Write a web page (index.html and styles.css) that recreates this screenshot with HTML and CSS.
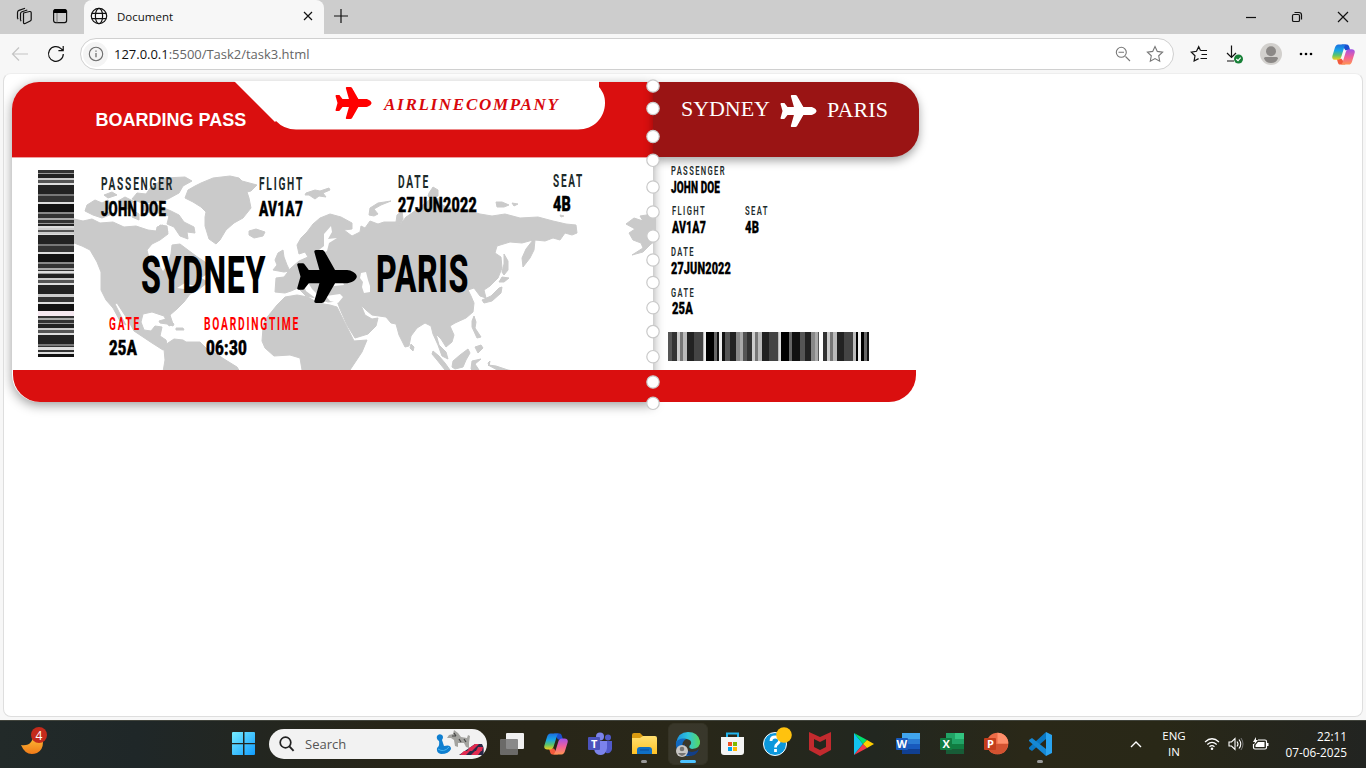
FILE: index.html
```html
<!DOCTYPE html>
<html lang="en">
<head>
<meta charset="utf-8">
<title>Document</title>
<link rel="stylesheet" href="styles.css">
</head>
<body>
<svg class="defs" width="0" height="0">
  <defs>
    <symbol id="plane" viewBox="0 0 576 512"><path d="M482.3 192c34.2 0 93.7 29 93.7 64c0 36-59.5 64-93.7 64l-116.6 0L265.2 495.9c-5.7 10-16.3 16.1-27.8 16.1l-56.2 0c-10.6 0-18.3-10.2-15.4-20.4l49-171.6L112 320 68.8 377.6c-3 4-7.8 6.4-12.8 6.4l-42 0c-7.8 0-14-6.3-14-14c0-1.3 .2-2.6 .5-3.9L32 256 .5 145.9c-.4-1.3-.5-2.6-.5-3.9c0-7.8 6.3-14 14-14l42 0c5 0 9.8 2.4 12.8 6.4L112 192l102.9 0-49-171.6C162.9 10.2 170.6 0 181.2 0l56.2 0c11.5 0 22.1 6.2 27.8 16.1L365.7 192l116.6 0z"/></symbol>
    <linearGradient id="cpA" x1="0" y1="0" x2="0" y2="1"><stop offset="0" stop-color="#1b6fe0"/><stop offset=".4" stop-color="#18a6e6"/><stop offset=".7" stop-color="#5cc46a"/><stop offset="1" stop-color="#f2cf1d"/></linearGradient>
    <linearGradient id="cpB" x1="0" y1="0" x2="0" y2="1"><stop offset="0" stop-color="#a052e8"/><stop offset=".5" stop-color="#f0609a"/><stop offset="1" stop-color="#ff9452"/></linearGradient>
    <symbol id="copilot" viewBox="0 0 24 24">
      <path fill="#1b4fd0" d="M10 1.500h5.500c1.700 0 2.200 1.500 2.600 3l.9 3h-5z"/>
      <path fill="#f25a3c" d="M14 22.500H8.500c-1.700 0-2.200-1.500-2.600-3l-.9-3h5z"/>
      <path fill="url(#cpA)" d="M6.500 1.500H15c-1.500.5-2 2-2.500 3.700L9.800 14c-.6 2-1.500 3.500-3.800 3.500H3.300c-2.300 0-3.600-1.500-2.900-4L3 5c.7-2.200 1.700-3.500 3.500-3.500z"/>
      <path fill="url(#cpB)" d="M17.500 22.500H9c1.500-.5 2-2 2.500-3.700l2.700-8.800c.6-2 1.500-3.500 3.800-3.500h2.700c2.300 0 3.600 1.500 2.900 4L21 19c-.7 2.200-1.700 3.500-3.500 3.500z"/>
    </symbol>
    <linearGradient id="win" x1="0" y1="0" x2="1" y2="1"><stop offset="0" stop-color="#76ecff"/><stop offset="1" stop-color="#119cff"/></linearGradient>
    <linearGradient id="edge" x1="0" y1="0" x2="1" y2="0"><stop offset="0" stop-color="#1a8fe0"/><stop offset=".5" stop-color="#2ec4dc"/><stop offset="1" stop-color="#58d85c"/></linearGradient>
    <linearGradient id="fold" x1="0" y1="0" x2="0" y2="1"><stop offset="0" stop-color="#ffdf70"/><stop offset="1" stop-color="#ffc225"/></linearGradient>
    <linearGradient id="moon" x1="0" y1="0" x2="0" y2="1"><stop offset="0" stop-color="#ffc83c"/><stop offset="1" stop-color="#f07a18"/></linearGradient>
  </defs>
</svg>

<header class="tabstrip">
  <div class="strip-icons">
    <svg width="18" height="18" viewBox="0 0 18 18" class="line"><path d="M8.500 6l6-1.500q1.700-.2 1.700 1.300v6.700q0 1-1 1.500l-5 2.500q-1.700.5-1.700-1V7.500zM5.500 13.500V6.800q0-1.500 1.500-2.100l5.300-1.700M2.500 11.500V5.500q0-1.600 1.500-2.100L10 1.300M5.500 13.500l.8.600M2.500 11.500l.8.600"/></svg>
    <svg width="16" height="16" viewBox="0 0 16 16"><rect x="1.600" y="1.600" width="13" height="13" rx="2" fill="none" stroke="#111" stroke-width="1.200"/><path d="M1.500 3q0-2 2-2h9q2 0 2 2v2h-13z" fill="#000"/><path d="M5 5v9.500" stroke="#777"/></svg>
  </div>
  <div class="tab">
    <svg width="18" height="18" viewBox="0 0 18 18" class="line"><circle cx="9" cy="9" r="7.700"/><ellipse cx="9" cy="9" rx="3.600" ry="7.700"/><path d="M2 6.300h14M2 11.700h14"/></svg>
    <span class="tab-title">Document</span>
    <svg width="10" height="10" viewBox="0 0 10 10" class="line"><path d="M1 1l8 8M9 1l-8 8"/></svg>
  </div>
  <svg class="plus line" width="16" height="16" viewBox="0 0 16 16"><path d="M8 1v14M1 8h14"/></svg>
  <div class="win-buttons">
    <svg width="12" height="12" viewBox="0 0 12 12" class="line"><path d="M1 6.500h10"/></svg>
    <svg width="12" height="12" viewBox="0 0 12 12" class="line"><rect x="1.500" y="3.500" width="7" height="7" rx="1.300"/><path d="M3.500 1.500H8q2.500 0 2.500 2.500v4.500"/></svg>
    <svg width="12" height="12" viewBox="0 0 12 12" class="line"><path d="M1 1l10 10M11 1L1 11"/></svg>
  </div>
</header>

<nav class="toolbar">
  <svg class="back" width="18" height="16" viewBox="0 0 18 16"><path d="M17 8H1.500M8 1.500L1.500 8 8 14.500" fill="none" stroke="#c4c4c4" stroke-width="1.200"/></svg>
  <svg class="reload line" width="18" height="18" viewBox="0 0 18 18"><path d="M16.300 9A7.400 7.400 0 1 1 14 3.600L16 5.500M16.200 1v4.700h-4.800"/></svg>
  <div class="address">
    <span class="info"><svg width="16" height="16" viewBox="0 0 16 16"><circle cx="8" cy="8" r="6.700" fill="none" stroke="#6e6e6e" stroke-width="1.100"/><path d="M8 7v4.200M8 4.500v1.300" stroke="#666" stroke-width="1.200"/></svg></span>
    <span class="url"><b>127.0.0.1</b>:5500/Task2/task3.html</span>
    <svg class="mag" width="16" height="16" viewBox="0 0 16 16"><path d="M10.500 10.500l4.500 4.500M3.500 6.300h5.500" /><circle cx="6.300" cy="6.300" r="5"/></svg>
    <svg class="mag" width="18" height="18" viewBox="0 0 18 18"><path d="M9 1.500l2.300 4.900 5.300.7-3.900 3.700 1 5.400L9 13.600l-4.700 2.600 1-5.400L1.400 7.100l5.300-.7z"/></svg>
  </div>
  <div class="tools">
    <svg width="18" height="18" viewBox="0 0 18 18" class="line"><path d="M10.500 5.500L8.700 1.700 6.500 6.300l-5.200.8L5 10.800l-.9 5.200 4.500-2.400M10.500 5.500H17M11.500 9.500H17M10.500 13.500H17"/></svg>
    <svg width="20" height="20" viewBox="0 0 20 20" class="line"><path d="M7.500 1.500v12M3 9l4.500 4.500L12 9M3 17h7"/><circle cx="14.500" cy="15" r="4.500" fill="#188038" stroke="none"/><path d="M12.300 15l1.700 1.600 2.700-3" stroke="#fff"/></svg>
    <svg width="22" height="22" viewBox="0 0 22 22"><circle cx="11" cy="11" r="11" fill="#d2d0cd"/><circle cx="11" cy="8.200" r="5" fill="#8b8886"/><path d="M4 15.500q0-1.500 1.500-1.500h11q1.500 0 1.500 1.500-2 4.500-7 4.500t-7-4.500z" fill="#8b8886"/></svg>
    <svg width="16" height="16" viewBox="0 0 16 16"><circle cx="3" cy="8" r="1.300"/><circle cx="8" cy="8" r="1.300"/><circle cx="13" cy="8" r="1.300"/></svg>
    <svg class="copilot" width="23" height="23"><use href="#copilot"/></svg>
  </div>
</nav>

<main class="viewport">
  <section class="ticket">
    <div class="pass">
      <div class="pass-head">
        <h1>BOARDING PASS</h1>
        <div class="brand">
          <svg class="brand-shape" width="372" height="49" viewBox="0 0 372 49"><path d="M-1-1L40 40l1-1q8 8.500 20 8.500h282c16 0 27-12 27-26.500 0-7-2-11-6-16V-1z" fill="#fff"/></svg>
          <svg class="brand-plane" width="37" height="32"><use href="#plane" fill="#f00"/></svg>
          <svg class="brand-name" width="180" height="22"><text x="0" y="16" textLength="174">AIRLINECOMPANY</text></svg>
        </div>
      </div>
      <div class="pass-body">
        <svg class="map" width="644" height="212" viewBox="12 158 644 212">
          <g fill="#cacaca" stroke="#cacaca" stroke-width="1" stroke-linejoin="round">
            <path d="M74 219L83 221 92 219 100 223 113 222 124 227 136 226 148 230 156 231 160 225 167 226 168 234 160 240 152 244 147 250 149 258 157 262 163 272 168 264 171 254 172 245 180 244 188 250 196 256 205 262 212 270 205 275 200 278 208 282 198 290 190 294 184 302 177 309 170 315 173 324 169 326 164 316 152 312 143 314 141 322 144 330 151 331 155 326 162 327 160 336 166 340 168 348 163 350 152 343 143 337 134 331 128 320 117 303 115 304 121 316 126 325 120 321 113 308 106 300 101 290 101 272 97 262 90 250 82 246 74 243Z"/>
            <path d="M164 349l4-6 6-4 9 1 3 2 14 0 7 7 8 4 9 6 13 8 3 5h-77l2-12z"/>
            <path d="M188 190l7-4 6-3 12-5 17-2 9 2 3 3 15 4-6 6-4 1 2 6 2 10-8 10-9 5-8 7-6 10-4 4-7-5-4-13 0-9 1-5-5-5-8-5-8-4z"/>
            <path d="M87 205l8-5 7 3 6-3 4 7-8 4 8 3-10 4-9-3-8-4zM118 201l7-4 8 4-3 8-9 0zM104 195l8-3 5 3-9 3zM132 199l5-6 9 1 5-7 14-9 20-1 7 4-9 5-4 7-11 6-15 3-11 1zM142 206l11-2 9 3 9 4 8 4 5 7 10 5 1 6-8-1 1 7-8-3-6-9-7-3 2-8-10-3-9 0-7-3zM134 211l5 3 0 6-7-3zM157 227l6-2 5 7-6 3-6-2z"/>
            <path d="M249 231l7-2 9 3-2 4-9 2-5-3zM306 193l9-3 5 1 9-3 1 2-7 3 3 4-7-1-4 3-6-4-4 0z"/>
            <path d="M159 321l7-2 8 5-1 2-6-2-7-1zM176 328l7 0 1 2-8 0z"/>
            <path d="M297 245L301 238 307 232 313 224 320 218 330 214 341 217 352 223 352 229 344 230 352 236 360 232 361 226 365 228 370 221 378 224 384 222 396 222 397 215 402 211 403 219 399 226 406 217 412 213 420 207 432 198 440 199 442 205 450 208 466 210 480 214 492 216 505 214 520 218 538 217 553 221 566 224 576 225 577 233 572 235 565 233 560 240 553 238 545 241 535 240 534 250 530 258 523 267 522 258 526 249 533 240 522 243 510 242 497 246 495 253 501 257 502 268 498 278 490 286 484 290 486 298 480 296 474 288 468 290 471 296 474 303 473 312 466 318 455 323 450 326 454 335 452 342 446 347 441 339 436 334 439 345 446 352 448 359 442 356 438 345 433 334 431 326 425 323 417 328 411 336 409 346 405 347 399 335 396 324 391 323 386 317 372 315 366 310 361 305 365 315 372 319 378 318 376 326 368 334 355 338 347 325 340 309 337 301 328 302 316 298 306 296 298 288 291 291 285 293 275 292 276 278 284 277 291 268 299 261 308 257 305 252 299 254Z"/>
            <path d="M263 328L265 320 277 305 285 297 297 295 308 297 318 303 330 305 337 307 345 323 354 341 367 340 362 352 350 370 302 370 300 358 290 355 274 356 265 348 262 341Z"/>
            <path d="M273 270l4-5-2-5 3-7 5-3 1 7 3 8 3 6-6 1z"/>
            <path d="M369 215l1-7 8-5 13-2-10 4-7 4 4 5-4 2zM429 193l4-6 5 3 0 6-7 2-3-2zM496 202l6 0 7 3-5 2-7 0zM512 203l6 1-4 2zM560 215l4 1-3 1z"/>
            <path d="M653 214l-13 2 3 5-9-3-8 6 9 5-6 4 4 7 8 3 2 5-11 7 11-3 8-8 6-4v-24z"/>
            <path d="M504 254l4 7 0 9-4 5-2-3 2-8zM502 277l7 1-5 4-5 0zM502 287l-1 6-9 8-8 2-2-3 9-4 8-8zM474 316l2 6-1 6 6 9-4 1-5-11 0-6zM475 347l6-2 2 3-5 5zM411 344l3 3-1 4-3-3zM433 351l6 5 6 7 5 7h-5l-8-10-5-6zM453 361l7-6 8-6 2 4-4 7-3 7-8 2-3-2zM471 369l1-8 9-2-6 5 4 6-6 1zM488 363l2-2-1 5zM488 365l8 1 12 4 11 2h-18z"/>
          </g>
          <g fill="#fff">
            <path d="M361 273l5-1 2 8 2 6 0 6-6 1-2-6 1-5-3-4z"/>
            <path d="M324 234l7-8 1 6-4 7 9-1-8 5-2 8-8 4 0-5 5-4z"/>
            <path d="M325 281l8-5 9 4 2 5-10 1-8 2zM326 296l14-2 3 3-5 6-8-2zM304 285l5-1 3 5 8 8-2 6-4-6-8-6zM177 288l8-5 9 3-10 3z"/>
          </g>
        </svg>
        <div class="barcode vertical"></div>
        <div class="details">
          <div class="row row-top">
            <svg width="158" height="46" class="field"><text x="0" y="14.500" textLength="73" lengthAdjust="spacingAndGlyphs">PASSENGER</text><text class="v" x="0" y="40.500" textLength="65" lengthAdjust="spacingAndGlyphs">JOHN DOE</text></svg>
            <svg width="139" height="46" class="field"><text x="0" y="14.500" textLength="45" lengthAdjust="spacingAndGlyphs">FLIGHT</text><text class="v" x="0" y="40.500" textLength="44" lengthAdjust="spacingAndGlyphs">AV1A7</text></svg>
            <svg width="155" height="46" class="field"><text x="0" y="12.500" textLength="32" lengthAdjust="spacingAndGlyphs">DATE</text><text class="v" x="0" y="37" textLength="79" lengthAdjust="spacingAndGlyphs">27JUN2022</text></svg>
            <svg width="60" height="46" class="field"><text x="0" y="11.500" textLength="31" lengthAdjust="spacingAndGlyphs">SEAT</text><text class="v" x="0" y="36" textLength="18" lengthAdjust="spacingAndGlyphs">4B</text></svg>
          </div>
          <div class="row row-route">
            <svg width="155" height="54" class="city"><text x="-1" y="43" textLength="125" lengthAdjust="spacingAndGlyphs">SYDNEY</text></svg>
            <svg width="60" height="53"><use href="#plane"/></svg>
            <svg width="100" height="54" class="city paris"><text x="-1" y="42" textLength="93" lengthAdjust="spacingAndGlyphs">PARIS</text></svg>
          </div>
          <div class="row row-gate">
            <svg width="95" height="46" class="field red"><text x="-1" y="15" textLength="32" lengthAdjust="spacingAndGlyphs">GATE</text><text class="v" x="-1" y="40" textLength="28" lengthAdjust="spacingAndGlyphs">25A</text></svg>
            <svg width="110" height="46" class="field red"><text x="-1" y="15" textLength="96" lengthAdjust="spacingAndGlyphs">BOARDINGTIME</text><text class="v" x="1" y="40" textLength="41" lengthAdjust="spacingAndGlyphs">06:30</text></svg>
          </div>
        </div>
      </div>
      <div class="pass-foot"></div>
    </div>

    <div class="stub">
      <div class="stub-head">
        <svg width="99" height="30" class="serif"><text x="0" y="21" textLength="89">SYDNEY</text></svg>
        <svg class="stub-plane" width="37" height="32"><use href="#plane" fill="#fff"/></svg>
        <svg width="66" height="30" class="serif"><text x="0" y="21.500" textLength="61">PARIS</text></svg>
      </div>
      <div class="stub-body">
        <svg width="120" height="40" class="small"><text x="0" y="10" textLength="55" lengthAdjust="spacingAndGlyphs">PASSENGER</text><text class="v" x="0" y="28" textLength="49" lengthAdjust="spacingAndGlyphs">JOHN DOE</text></svg>
        <div class="pair">
          <svg width="74" height="41" class="small"><text x="1" y="10" textLength="34" lengthAdjust="spacingAndGlyphs">FLIGHT</text><text class="v" x="1" y="28" textLength="34" lengthAdjust="spacingAndGlyphs">AV1A7</text></svg>
          <svg width="60" height="41" class="small"><text x="0" y="10" textLength="24" lengthAdjust="spacingAndGlyphs">SEAT</text><text class="v" x="0" y="28" textLength="14" lengthAdjust="spacingAndGlyphs">4B</text></svg>
        </div>
        <svg width="120" height="41" class="small"><text x="0" y="10" textLength="24" lengthAdjust="spacingAndGlyphs">DATE</text><text class="v" x="0" y="28" textLength="60" lengthAdjust="spacingAndGlyphs">27JUN2022</text></svg>
        <svg width="120" height="44" class="small"><text x="0" y="10" textLength="24" lengthAdjust="spacingAndGlyphs">GATE</text><text class="v" x="1" y="27" textLength="21" lengthAdjust="spacingAndGlyphs">25A</text></svg>
        <div class="barcode horizontal"></div>
      </div>
      <div class="stub-foot"></div>
    </div>

    <svg class="holes" width="16" height="332" viewBox="0 78 16 332">
      <g fill="#fff" stroke="#c9c9c9" stroke-width="1.200"><circle cx="8" cy="86" r="6.200"/><circle cx="8" cy="108.500" r="6.200"/><circle cx="8" cy="136.500" r="6.200"/><circle cx="8" cy="160.300" r="6.200"/><circle cx="8" cy="187" r="6.200"/><circle cx="8" cy="212" r="6.200"/><circle cx="8" cy="236" r="6.200"/><circle cx="8" cy="260" r="6.200"/><circle cx="8" cy="282.500" r="6.200"/><circle cx="8" cy="307.700" r="6.200"/><circle cx="8" cy="331.600" r="6.200"/><circle cx="8" cy="356.700" r="6.200"/><circle cx="8" cy="382" r="6.200"/><circle cx="8" cy="403.300" r="6.200"/></g>
    </svg>
  </section>
</main>

<footer class="taskbar">
  <div class="weather">
    <svg width="26" height="30" viewBox="0 0 26 30"><path d="M0 18q7 1 10-3t2-8q9 0 10 8 0 8-6 11-11 4-16-8z" fill="url(#moon)"/><circle cx="18" cy="8" r="8" fill="#c42b1c"/><text x="14.500" y="12.500" class="badge">4</text></svg>
  </div>
  <div class="apps">
    <svg width="24" height="24" viewBox="0 0 24 24"><path d="M0 1q0-1 1-1h10v11H0zM12.500 0h9.500q1 0 1 1v10H12.500zM0 12.300h11V23H1q-1 0-1-1zM12.500 12.300H23V22q0 1-1 1h-9.500z" fill="url(#win)"/></svg>
    <div class="search">
      <svg width="16" height="16" viewBox="0 0 16 16"><circle cx="6.500" cy="6.500" r="5.300" fill="none" stroke="#222" stroke-width="1.700"/><path d="M10.400 10.400L14.600 14.800" stroke="#222" stroke-width="1.900"/></svg>
      <span>Search</span>
      <svg class="toys" width="50" height="28" viewBox="0 0 50 28"><path d="M2 6q2-3 5-1 2 2 0 5l2 6q7-2 7 3-2 5-10 5-5-1-4-6 3-2 2-7-3-2-2-5z" fill="#0f7fd0"/><path d="M3 19q6 4 11-2" stroke="#45b4f0" fill="none"/><path d="M14 5l4-1 1-4 4 3 3 4 6 1 1-3 2 1-1 7 0 5-3-1-2-4-6 0 0 4-3-1-1-6-3-2-4 0z" fill="#a3a39f"/><path d="M19 3l2 3M24 9l2 3M29 9l2 3M17 6h4" stroke="#444" stroke-width="1.200"/><path d="M24 25L40 14h7q3 5 1 11z" fill="#292a48"/><path d="M40 14l4 0-3 3h-5zM43 17h5l-1 4h-6zM35 17l6 0-4 4h-5zM29 21h6l-4 4h-6zM40 21h6l-3 4h-7z" fill="#e22b50"/></svg>
    </div>
    <div class="slot"><svg width="24" height="24" viewBox="0 0 24 24"><rect x="6" y="1" width="18" height="16" rx="1" fill="#f0f0f0"/><rect x="0" y="7" width="18" height="16" rx="1" fill="#777" opacity=".85"/></svg></div>
    <div class="slot"><svg width="24" height="24"><use href="#copilot"/></svg></div>
    <div class="slot"><svg width="26" height="24" viewBox="0 0 26 24"><circle cx="13" cy="4.500" r="4" fill="#7b83eb"/><circle cx="21" cy="5.500" r="3" fill="#5059c9"/><path d="M17 9h8v8q-1 5-6 4z" fill="#5059c9"/><path d="M7 9h13v7q-1 7-6 7-6 0-7-6z" fill="#7b83eb"/><rect x="1" y="5" width="12" height="13" rx="1" fill="#4b53bc"/><text x="4" y="15.500" class="app">T</text></svg></div>
    <div class="slot open"><svg width="25" height="24" viewBox="0 0 25 24"><path d="M0 3q0-2 2-2h6l3 3v4H0z" fill="#d99a10"/><path d="M0 6h8l3-2h12q2 0 2 2v16H0z" fill="url(#fold)"/><path d="M5 22v-4q0-3 3-3h9q3 0 3 3v4z" fill="#0f6fc4"/><path d="M8 18h9" stroke="#0c4c98"/></svg></div>
    <div class="slot active"><svg width="26" height="26" viewBox="0 0 26 26"><path d="M1 12Q3 1 13 1q10 0 12 9 1 7-8 8-5-1-1-5 1-4-4-5-6-1-11 4z" fill="url(#edge)"/><path d="M1 11q4-5 10-3-5 3-3 9 2 6 9 7-7 3-12-2-5-4-4-11z" fill="#1169c0"/><path d="M10 13q-1 7 7 8 4 0 7-3-2 6-8 7-7-1-8-7 0-4 2-5z" fill="#123f88"/><circle cx="7" cy="20" r="6" fill="#c8c6c4"/><circle cx="7" cy="18" r="2.300" fill="#767472"/><path d="M3 22h8q-2 3-4 3t-4-3z" fill="#767472"/></svg></div>
    <div class="slot"><svg width="24" height="24" viewBox="0 0 24 24"><path d="M7 7V1.500h11V7" fill="none" stroke="#20b4ee" stroke-width="2"/><path d="M1 5h23v15q0 3-3 3H4q-3 0-3-3z" fill="#f4f4f4"/><path d="M8 10h4v4H8z" fill="#f25022"/><path d="M13 10h4v4h-4z" fill="#7fba00"/><path d="M8 15h4v4H8z" fill="#00a4ef"/><path d="M13 15h4v4h-4z" fill="#ffb900"/></svg></div>
    <div class="slot help"><svg width="30" height="32" viewBox="0 0 30 32"><circle cx="14" cy="17" r="11.500" fill="#0c98dc" stroke="#fff"/><path d="M10 14q0-4 4.200-4 4.300 0 4.300 3.500 0 2-2.300 3.500-1.700 1-1.700 3.500M14.500 22v3" fill="none" stroke="#fff" stroke-width="2.800"/><circle cx="23" cy="8" r="7.800" fill="#ffc20e"/></svg></div>
    <div class="slot"><svg width="24" height="24" viewBox="0 0 24 24"><path d="M1 0l11 5 11-5v18l-11 6-11-6zM6 7v8l6 3 6-3V7l-6 3z" fill="#c22a2e" fill-rule="evenodd"/></svg></div>
    <div class="slot"><svg width="22" height="24" viewBox="0 0 22 24"><path d="M1 1v22l9-11z" fill="#12c3f0"/><path d="M1 1l13 7-4 4z" fill="#00e070"/><path d="M1 23l13-7-4-4z" fill="#f2384a"/><path d="M14 8l7 4-7 4-4-4z" fill="#ffce00"/></svg></div>
    <div class="slot"><svg width="26" height="24" viewBox="0 0 26 24"><path d="M7 1h18v6H7z" fill="#41a5ee"/><path d="M7 7h18v5H7z" fill="#2b7cd3"/><path d="M7 12h18v5H7z" fill="#185abd"/><path d="M7 17h18v5H7z" fill="#103f91"/><rect x="1" y="6" width="12" height="12" rx="1" fill="#185abd"/><text x="1.500" y="15.500" class="app">W</text></svg></div>
    <div class="slot"><svg width="26" height="24" viewBox="0 0 26 24"><path d="M7 1h18v21H7z" fill="#21a366"/><path d="M16 1h9v6h-9z" fill="#33c481"/><path d="M7 12h18v10H7z" fill="#107c41"/><path d="M7 17h18v5H7z" fill="#185c37"/><rect x="1" y="6" width="12" height="12" rx="1" fill="#107c41"/><text x="3.500" y="15.500" class="app">X</text></svg></div>
    <div class="slot"><svg width="26" height="24" viewBox="0 0 26 24"><circle cx="14.500" cy="11.500" r="10.800" fill="#ed6c47"/><path d="M14.500.7a10.800 10.800 0 0 1 10.800 10.800H14.500z" fill="#ff8f6b"/><path d="M4 12h21q-1 10-10.500 10.300Q5 22 4 12z" fill="#d35230"/><rect x="1" y="6" width="12" height="12" rx="1" fill="#c43e1c"/><text x="4" y="15.500" class="app">P</text></svg></div>
    <div class="slot open"><svg width="25" height="24" viewBox="0 0 25 24"><path d="M18 0v7L4 19l-3-2 0-1.500z" fill="#0a78c4"/><path d="M1 8l3-2 14 11v7L1 9z" fill="#1688d4"/><path d="M18 0l6 3v18l-6 3z" fill="#2aa4f0"/></svg></div>
  </div>
  <div class="tray">
    <svg width="12" height="8" viewBox="0 0 12 8"><path d="M1 7l5-5 5 5" fill="none" stroke="#fff" stroke-width="1.400"/></svg>
    <div class="lang">ENG<br>IN</div>
    <div class="status">
      <svg width="16" height="14" viewBox="0 0 16 14"><path d="M1 5q7-6.500 14 0M3.300 7.500q4.700-4.300 9.400 0M5.500 9.800q2.500-2.200 5 0" fill="none" stroke="#fff" stroke-width="1.200"/><circle cx="8" cy="11.800" r="1.300" fill="#fff"/></svg>
      <svg width="16" height="14" viewBox="0 0 16 14"><path d="M1 5h2.500L7 1.500v11L3.500 9H1zM9 4.500q2 2.500 0 5M11 2.500q3.500 4.500 0 9" fill="none" stroke="#fff" stroke-width="1.100"/><path d="M13 1q4 6 0 12" fill="none" stroke="#777"/></svg>
      <svg width="17" height="14" viewBox="0 0 17 14"><path d="M6 3h7q1.500 0 1.500 1.500v6q0 1.500-1.500 1.500H3q-1.500 0-1.500-1.500V7" fill="none" stroke="#fff" stroke-width="1.200"/><path d="M6 5h6.500v5h-9V8zM15 6h1.500v3H15zM4 0L1 5h2L2 8l4-5H4z" fill="#fff"/></svg>
    </div>
    <div class="clock">22:11<br>07-06-2025</div>
  </div>
</footer>
</body>
</html>
```
FILE: styles.css
```css
* { box-sizing: border-box; }
body {
  margin: 0;
  width: 1366px;
  height: 768px;
  display: flex;
  flex-direction: column;
  overflow: hidden;
  background: #f7f7f7;
  font-family: "Open Sans", "Noto Sans", sans-serif;
}
svg { display: block; flex: none; overflow: visible; }
.defs { position: absolute; }
.line { fill: none; stroke: #111; stroke-width: 1.2; }

/* browser tabs */
.tabstrip { height: 34px; flex: none; display: flex; background: #cdcdcd; }
.strip-icons {
  width: 84px;
  display: flex;
  align-items: center;
  gap: 19px;
  padding: 0 0 2px 15px;
}
.tab {
  width: 240px;
  display: flex;
  align-items: center;
  padding: 0 11px 2px 6px;
  background: #f7f7f7;
  border-radius: 8px 8px 0 0;
}
.tab-title { flex: 1; padding-left: 9px; font-size: 11.5px; color: #111; }
.plus { margin: 8px 0 0 9px; }
.win-buttons { display: flex; align-items: center; gap: 34px; margin-left: auto; padding-right: 17px; }

/* address bar */
.toolbar { height: 39px; flex: none; display: flex; align-items: center; padding: 1px 0 0 11px; }
.reload { margin-left: 18px; }
.address {
  width: 1094px;
  height: 32px;
  margin-left: 15px;
  display: flex;
  align-items: center;
  gap: 15px;
  padding: 0 9px 0 2px;
  background: #fff;
  border: 1px solid #d0d0d0;
  border-radius: 16px;
}
.info {
  width: 25px;
  height: 25px;
  display: grid;
  place-items: center;
  border-radius: 50%;
  background: #f4f4f4;
}
.url { flex: 1; margin-left: -9px; font-size: 13px; letter-spacing: -0.02px; color: #666; }
.url b { font-weight: 400; color: #111; }
.mag { fill: none; stroke: #777; stroke-width: 1.1; }
.tools { display: flex; align-items: center; gap: 16px; padding-left: 16px; }
.copilot { margin-left: 2px; }

.viewport {
  height: 644px;
  flex: none;
  margin: 0 3px;
  padding: 9px;
  background: #fff;
  border: 1px solid #dedede;
  border-top-color: #eee;
  border-radius: 8px;
  overflow: hidden;
}

/* boarding pass */
.ticket { position: relative; width: 907px; display: flex; margin: -1px 0 0 -1px; }
.pass {
  width: 641px;
  border-radius: 27px 0 0 27px;
  box-shadow: 0 3px 12px rgba(0, 0, 0, 0.4);
}
.pass-head {
  height: 76px;
  display: flex;
  background: #da0f0f;
  border-bottom: 1px solid #efa0a0;
  border-radius: 27px 0 0 0;
}
.pass-head h1 {
  width: 223px;
  margin: 28px 0 0;
  padding-left: 83.5px;
  white-space: nowrap;
  font: bold 18px "Liberation Sans", Arial, sans-serif;
  color: #fff;
}
.brand { position: relative; width: 372px; height: 49px; display: flex; padding: 5px 0 0 100px; }
.brand-shape { position: absolute; left: 0; top: 0; }
.brand-plane, .brand-name { position: relative; }
.brand-name { margin: 7px 0 0 12px; }
.brand-name text {
  font: italic bold 17px "Liberation Serif", serif;
  fill: #d8080c;
}
.pass-body { position: relative; height: 212px; display: flex; padding: 12px 0 0 26px; background: #fff; }
.map { position: absolute; left: 0; top: 0; overflow: hidden; }
.details { position: relative; padding-left: 27px; }
.row { display: flex; }
.row-top { padding-top: 5px; }
.row-route { padding: 29px 0 0 41px; }
.paris { margin-left: 20px; }
.row-gate { padding: 11px 0 0 9px; }
.pass-foot { height: 32px; margin-left: 1px; background: #da0f0f; border-radius: 0 0 0 27px; }

.field text, .small text, .city text { font-family: "Roboto", sans-serif; }
.field text { font-size: 17.5px; font-weight: 700; letter-spacing: 3px; fill: #1d2b2b; }
.field .v { font-size: 21px; font-weight: 900; letter-spacing: 0.3px; fill: #000; stroke: #000; stroke-width: 0.4px; }
.field.red text { fill: #f00; }
.field.red .v { fill: #000; }
.city text { font-size: 52px; font-weight: 800; letter-spacing: 1px; fill: #000; }
.small text { font-size: 12px; font-weight: 600; letter-spacing: 2.2px; fill: #1d2b2b; }
.small .v { font-size: 16px; font-weight: 900; letter-spacing: 0.2px; fill: #000; stroke: #000; stroke-width: 0.3px; }

/* stub */
.stub { width: 266px; display: flex; flex-direction: column; }
.stub-head {
  height: 75px;
  display: flex;
  padding: 13px 0 0 28px;
  background: #9a1414;
  border-radius: 0 27px 27px 0;
  box-shadow: 0 4px 10px rgba(0, 0, 0, 0.35);
}
.stub-plane { margin-right: 10px; }
.serif text { font: 22px "Liberation Serif", serif; fill: #fff; }
.stub-body { height: 213px; padding: 8px 0 0 18px; }
.pair { display: flex; }
.stub-foot { width: 263px; height: 32px; background: #da0f0f; border-radius: 0 0 27px 0; }
.holes { position: absolute; left: 633px; top: -4px; }

.barcode { flex: none; filter: blur(0.6px); }
.vertical {
  position: relative;
  width: 36px;
  height: 187px;
  background:
    linear-gradient(to bottom, transparent 56px, #ddd 56px 58px, transparent 58px 62px, #ccc 62px 64px, transparent 64px 101px, #ddd 101px 103px, transparent 103px 124px, #ccc 124px 127px, transparent 127px 141px, #f5e8f0 141px 146px, transparent 146px 177px, #ddd 177px 180px, transparent 180px),
    repeating-linear-gradient(to bottom, #333 0 3px, #999 3px 4px, #222 4px 8px, #ccc 8px 10px, #555 10px 13px, #ddd 13px 15px, #222 15px 24px, #777 24px 26px, #333 26px 32px, #ddd 32px 34px, #111 34px 42px, #888 42px 44px, #333 44px 48px, #aaa 48px 50px);
}
.horizontal {
  width: 201px;
  height: 29px;
  margin: 1px 0 0 -3px;
  background:
    linear-gradient(to right, transparent 36px, #eee 36px 38px, transparent 38px 51px, #eee 51px 54px, transparent 54px 111px, #ddd 111px 113px, transparent 113px 151px, #fff 151px 155px, transparent 155px 190px, #eee 190px 193px, transparent 193px),
    repeating-linear-gradient(to right, #555 0 4px, #333 4px 9px, #ccc 9px 12px, #777 12px 15px, #bbb 15px 19px, #222 19px 26px, #444 26px 35px, #bbb 35px 38px, #000 38px 46px, #666 46px 49px, #111 49px 57px, #555 57px 62px, #222 62px 68px, #888 68px 72px, #aaa 72px 75px);
}

/* taskbar */
.taskbar {
  height: 48px;
  margin-top: auto;
  flex: none;
  display: flex;
  background: linear-gradient(90deg, #222a29 0, #1f2728 10%, #272518 28%, #292718 50%, #222720 64%, #2a2818 75%, #292817 85%, #222421 100%);
  border-top: 1px solid #41443c;
  color: #fff;
}
.weather { width: 232px; padding: 6px 0 0 21px; }
.badge { font: 12px "Open Sans", sans-serif; fill: #fff; }
.apps { display: flex; align-items: center; padding-bottom: 1px; }
.search {
  width: 218px;
  height: 30px;
  display: flex;
  align-items: center;
  gap: 10px;
  margin: 0 3px 0 13px;
  padding: 0 2px 0 10px;
  border-radius: 15px;
  background: #f2f2f2;
  color: #555;
  font-size: 13px;
}
.toys { margin-left: auto; }
.slot { position: relative; width: 44px; height: 40px; display: grid; place-items: center; }
.help { padding-bottom: 2px; }
.active { background: rgba(255, 255, 255, 0.08); border-radius: 5px; width: 38px; margin: 0 3px; outline: 1px solid rgba(255, 255, 255, 0.06); }
.open::after, .active::after {
  content: "";
  position: absolute;
  bottom: 1px;
  left: calc(50% - 3px);
  width: 6px;
  height: 3px;
  border-radius: 2px;
  background: #999;
}
.active::after { left: calc(50% - 8px); width: 16px; background: #4cc2ff; }
.app { font: bold 11px "Open Sans", sans-serif; fill: #fff; }
.tray { margin-left: auto; display: flex; align-items: center; padding: 0 19px 1px 0; font-size: 11.8px; line-height: 16px; }
.lang { width: 32px; margin: 0 14px 0 16px; text-align: center; font-size: 11.5px; }
.status { display: flex; gap: 8px; }
.clock { width: 63px; margin-left: 15px; text-align: right; white-space: nowrap; }
```
